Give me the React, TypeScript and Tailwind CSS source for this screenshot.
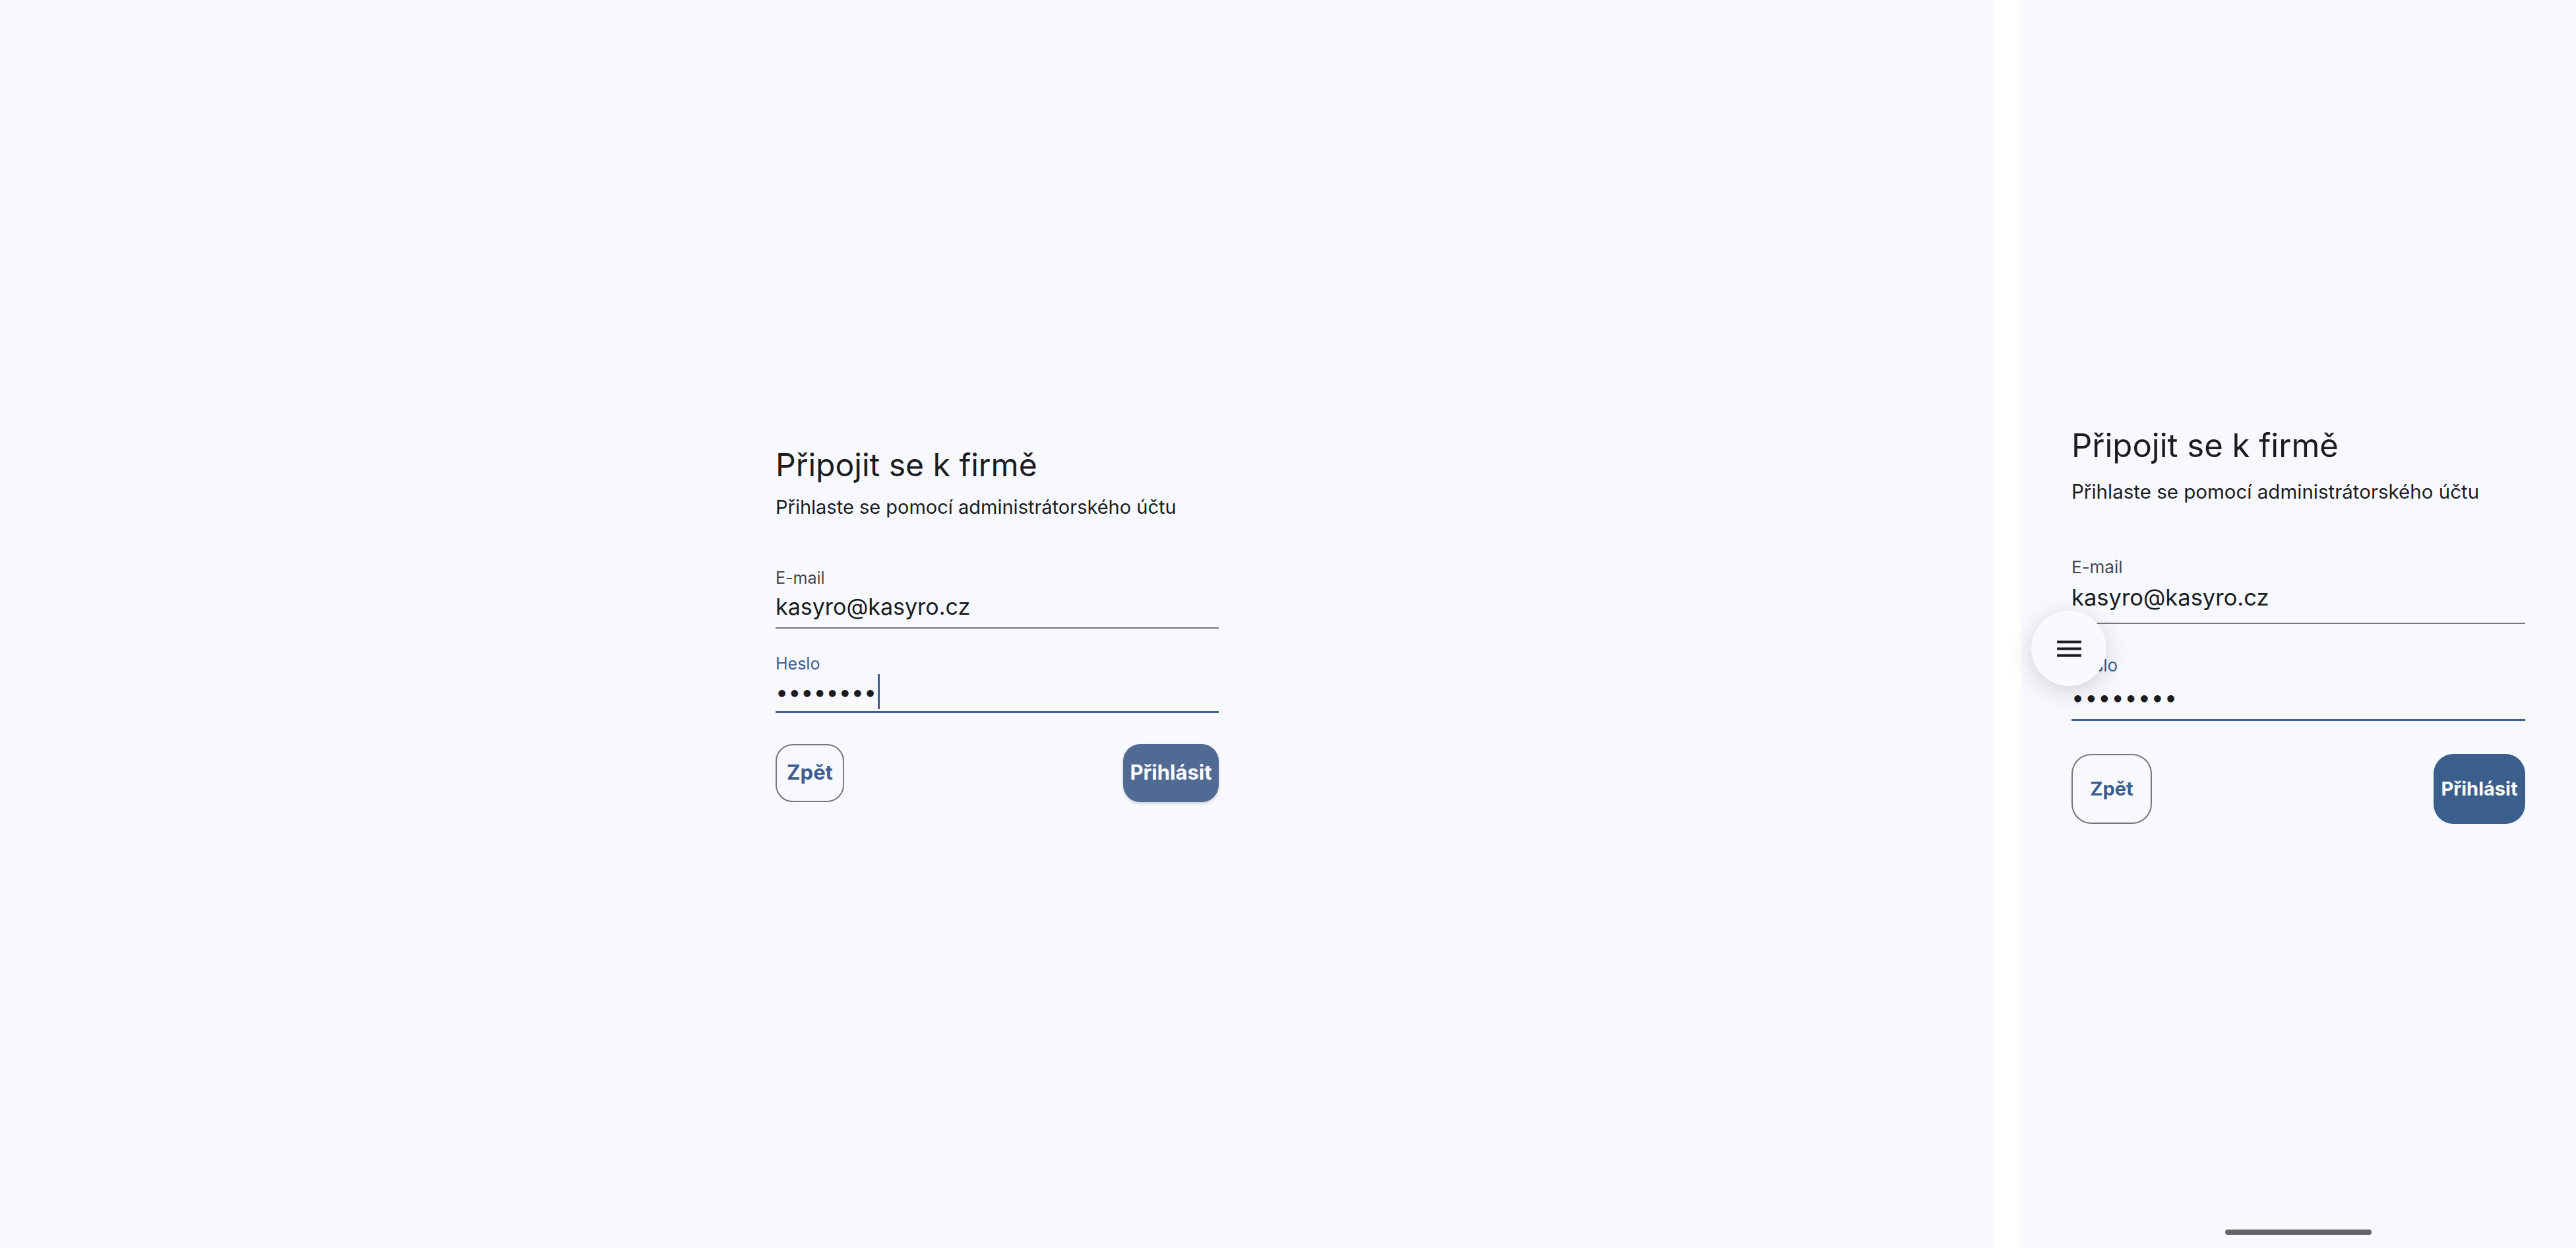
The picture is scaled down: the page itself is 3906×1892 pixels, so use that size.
import React from 'react';

const font = { fontFamily: 'Inter, "Noto Sans", sans-serif' };

function MenuIcon() {
  return (
    <svg width="49" height="49" viewBox="0 0 24 24" fill="#1a1c20">
      <path d="M3 18h18v-2H3v2zm0-5h18v-2H3v2zm0-7v2h18V6H3z" />
    </svg>
  );
}

export default function App() {
  return (
    <div className="flex w-full h-[1892px] bg-[#f8f9ff] text-[#1a1c20] overflow-hidden" style={font}>
      {/* Wide layout */}
      <section className="flex-1 flex items-center justify-center bg-[#f8f9ff]">
        <div className="w-[672px] flex flex-col">
          <h1 className="text-[48px] leading-[56px] font-normal">Připojit se k firmě</h1>
          <p className="mt-[18px] text-[29px] leading-[36px]">Přihlaste se pomocí administrátorského účtu</p>

          <div className="mt-[75px] flex flex-col border-b-2 border-[#74777f] pb-[9px]">
            <span className="text-[25px] leading-[28px] text-[#44474e]">E-mail</span>
            <span className="mt-[8px] text-[34px] leading-[44px]">kasyro@kasyro.cz</span>
          </div>

          <div className="mt-[39px] flex flex-col border-b-[3px] border-[#3f5f90]">
            <span className="text-[25px] leading-[28px] text-[#3f5f90]">Heslo</span>
            <div className="h-[58px] flex items-center">
              <span className="text-[34px] leading-[44px]">••••••••</span>
              <span className="w-[3px] h-[53px] bg-[#3f5f90] ml-[2px]" />
            </div>
          </div>

          <div className="mt-[47px] flex items-center justify-between">
            <button className="h-[88px] w-[104px] rounded-[26px] border-2 border-[#74777f] text-[31px] font-bold text-[#3f5f90]">
              Zpět
            </button>
            <button className="h-[88px] w-[145px] rounded-[26px] bg-[#506a94] text-[31px] font-bold text-white shadow-[0_2px_4px_rgba(0,0,0,0.2)]">
              Přihlásit
            </button>
          </div>
        </div>
      </section>

      {/* Divider strip */}
      <div className="w-[40px] bg-white" />

      {/* Compact layout */}
      <section className="relative w-[842px] flex items-center justify-center bg-[#f8f9ff]">
        <div className="w-[688px] pt-[5px] flex flex-col">
          <h1 className="text-[49px] leading-[56px] font-normal">Připojit se k firmě</h1>
          <p className="mt-[23px] text-[29.5px] leading-[36px]">Přihlaste se pomocí administrátorského účtu</p>

          <div className="mt-[83px] flex flex-col border-b-2 border-[#74777f] pb-[16px]">
            <span className="text-[26px] leading-[28px] text-[#44474e]">E-mail</span>
            <span className="mt-[10px] text-[34.5px] leading-[44px]">kasyro@kasyro.cz</span>
          </div>

          <div className="mt-[49px] flex flex-col border-b-[3px] border-[#3a5f8e]">
            <span className="text-[26px] leading-[28px] text-[#3a5f8e]">Heslo</span>
            <div className="h-[67px] flex items-center">
              <span className="text-[34px] leading-[44px] tracking-[1px]">••••••••</span>
            </div>
          </div>

          <div className="mt-[50px] flex items-center justify-between">
            <button className="h-[106px] w-[122px] rounded-[30px] border-2 border-[#74777f] text-[29px] font-bold text-[#3a5f8e]">
              Zpět
            </button>
            <button className="h-[106px] w-[139px] rounded-[30px] bg-[#3b5f8d] text-[29px] font-bold text-white">
              Přihlásit
            </button>
          </div>
        </div>

        {/* Floating menu button */}
        <button className="absolute left-[16px] top-[926px] w-[114px] h-[114px] rounded-full bg-[#f9f9fe] flex items-center justify-center shadow-[0_8px_36px_rgba(0,0,0,0.16)]">
          <MenuIcon />
        </button>

        {/* Gesture bar */}
        <div className="absolute bottom-[20px] left-1/2 -translate-x-1/2 w-[222px] h-[8px] rounded-full bg-[#646569]" />
      </section>
    </div>
  );
}
